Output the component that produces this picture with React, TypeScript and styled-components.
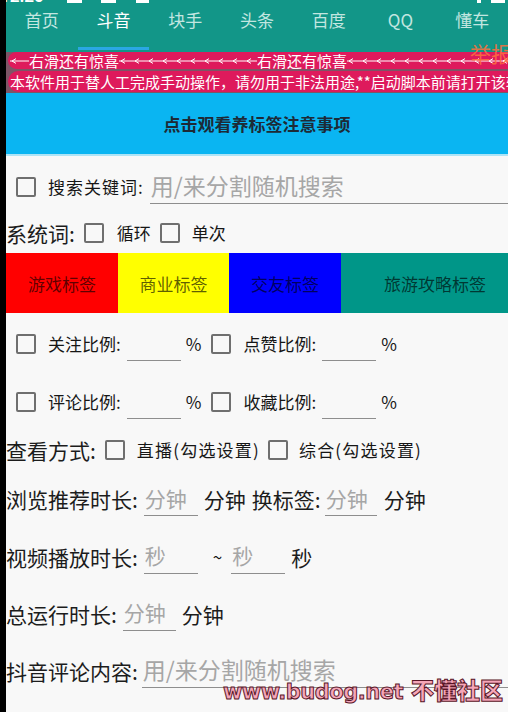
import React from 'react';
import styled, { createGlobalStyle } from 'styled-components';

const GlobalStyle = createGlobalStyle`
  html, body {
    margin: 0;
    padding: 0;
    background: #000;
  }
  body {
    font-family: 'Noto Sans CJK SC', 'Noto Sans', sans-serif;
  }
  * {
    box-sizing: border-box;
  }
`;

const CJK = `'Noto Sans CJK SC', 'Noto Sans', sans-serif`;

const Screen = styled.div`
  position: relative;
  width: 508px;
  height: 712px;
  overflow: hidden;
  background: #000;
  padding-left: 6px;
`;

const Page = styled.div`
  height: 100%;
  background: #f8f8f8;
  display: flex;
  flex-direction: column;
`;

/* header */

const Header = styled.header`
  background: #129688;
`;

const StatusBar = styled.div`
  height: 5px;
  overflow: hidden;
  display: flex;
  align-items: flex-end;
  color: #fff;
`;

const Clock = styled.span`
  margin-left: -6px;
  width: 60px;
  font-family: 'Roboto', sans-serif;
  font-weight: 700;
  font-size: 17px;
  line-height: 17px;
  height: 17px;
`;

const StatusIcon = styled.span<{ $ml: number; $w: number }>`
  align-self: flex-start;
  margin-left: ${p => p.$ml}px;
  width: ${p => p.$w}px;
  height: 3px;
  background: #fff;
`;

const Tabs = styled.nav`
  display: flex;
  height: 45px;
`;

const Tab = styled.div<{ $active?: boolean }>`
  flex: 1;
  display: flex;
  justify-content: center;
  padding-top: 5px;
  font-size: 17px;
  line-height: 20px;
  color: ${p => (p.$active ? '#ffffff' : '#c2e6e0')};
  border-bottom: 3px solid ${p => (p.$active ? '#2aa7e2' : 'transparent')};
`;

/* pink notice band */

const Notice = styled.div`
  background: linear-gradient(#129688 0 2px, #7d5566 2px);
  padding: 2px 0 1px 2px;
  display: flex;
  flex-direction: column;
  gap: 2px;
`;

const NoticeRow = styled.div<{ $h: number }>`
  height: ${p => p.$h}px;
  border-radius: ${p => p.$h / 2}px 0 0 ${p => p.$h / 2}px;
  background: #de1a5c;
  color: #fff;
  display: flex;
  align-items: center;
  white-space: nowrap;
  overflow: hidden;
  font-size: 15px;
  line-height: ${p => p.$h}px;
  padding-left: 2px;
`;

const ArrowSvg = styled.svg`
  flex-shrink: 0;
  display: block;
`;

const ArrowLine: React.FC<{ width: number }> = ({ width }) => {
  const heads: string[] = [];
  for (let x = 2; x < width - 4; x += 14) {
    heads.push(`M${x} 5 L${x + 4} 2.6 M${x} 5 L${x + 4} 7.4`);
  }
  return (
    <ArrowSvg width={width} height={10} viewBox={`0 0 ${width} 10`}>
      <path d={`M0 5 H${width} ${heads.join(' ')}`} stroke="#fff" strokeWidth={1} fill="none" />
    </ArrowSvg>
  );
};

/* guide button */

const GuideButton = styled.div`
  height: 63px;
  background: #0ab5f2;
  border-bottom: 2px solid #aee4f6;
  display: flex;
  align-items: center;
  justify-content: center;
  font-size: 17px;
  font-weight: 700;
  color: #1d2a36;
`;

/* form rows */

const Row = styled.div<{ $h: number; $pt?: number }>`
  height: ${p => p.$h}px;
  padding-top: ${p => p.$pt ?? 0}px;
  display: flex;
  align-items: center;
  white-space: nowrap;
`;

const Label = styled.span<{ $ml?: number }>`
  margin-left: ${p => p.$ml ?? 0}px;
  font-size: 21px;
  line-height: 28px;
  color: #1c1c1c;
`;

const CheckText = styled.span<{ $ml?: number; $ls?: number }>`
  margin-left: ${p => p.$ml ?? 12}px;
  font-size: 17px;
  line-height: 24px;
  letter-spacing: ${p => p.$ls ?? 0}px;
  color: #161616;
`;

const Box = styled.span<{ $ml: number }>`
  flex-shrink: 0;
  margin-left: ${p => p.$ml}px;
  width: 20px;
  height: 20px;
  border: 2px solid #6f6f6f;
  border-radius: 2px;
`;

const Field = styled.input<{ $w?: number; $ml: number; $fs: number }>`
  ${p => (p.$w ? `width: ${p.$w}px;` : 'flex: 1; min-width: 0;')}
  margin-left: ${p => p.$ml}px;
  height: 34px;
  padding: 0 0 2px 1px;
  border: none;
  border-bottom: 1.5px solid #8e8e8e;
  background: transparent;
  outline: none;
  font-family: ${CJK};
  font-size: ${p => p.$fs}px;
  color: #1c1c1c;

  &::placeholder {
    color: #a6a6a6;
  }
`;

const Tags = styled.div`
  display: flex;
  height: 60px;
`;

const TagButton = styled.div<{ $bg: string; $w?: number; $pl?: number }>`
  ${p => (p.$w ? `width: ${p.$w}px;` : 'flex: 1;')}
  background: ${p => p.$bg};
  padding-left: ${p => p.$pl ?? 0}px;
  display: flex;
  align-items: center;
  justify-content: center;
  font-size: 17px;
  color: rgba(0, 0, 0, 0.64);
`;

/* overlays */

const ReportMark = styled.span`
  position: absolute;
  left: 470px;
  top: 40px;
  font-size: 21px;
  line-height: 26px;
  color: rgba(255, 112, 60, 0.85);
  white-space: nowrap;
`;

const Watermark = styled.div`
  position: absolute;
  right: 5px;
  bottom: 9px;
  font-family: 'DejaVu Sans', ${CJK};
  font-weight: 800;
  font-size: 21px;
  line-height: 22px;
  letter-spacing: -0.5px;
  color: #f6a6b8;
  -webkit-text-stroke: 1px #5a1628;
  white-space: nowrap;
`;

const WatermarkCjk = styled.span`
  font-family: ${CJK};
  font-weight: 900;
  font-size: 23px;
  letter-spacing: 0;
  margin-left: 8px;
`;

const tabs = ['首页', '斗音', '块手', '头条', '百度', 'QQ', '懂车'];

const App: React.FC = () => {
  return (
    <Screen>
      <GlobalStyle />
      <Page>
        <Header>
          <StatusBar>
            <Clock>12:20</Clock>
            <StatusIcon $ml={7} $w={15} />
            <StatusIcon $ml={19} $w={15} />
            <StatusIcon $ml={20} $w={13} />
            <StatusIcon $ml={328} $w={4} />
            <StatusIcon $ml={10} $w={14} />
          </StatusBar>
          <Tabs>
            {tabs.map((t, i) => (
              <Tab key={t} $active={i === 1}>{t}</Tab>
            ))}
          </Tabs>
        </Header>

        <Notice>
          <NoticeRow $h={17}>
            <ArrowLine width={19} />
            右滑还有惊喜
            <ArrowLine width={138} />
            右滑还有惊喜
            <ArrowLine width={200} />
          </NoticeRow>
          <NoticeRow $h={21}>
            本软件用于替人工完成手动操作，请勿用于非法用途,**启动脚本前请打开该软件无障碍服务**
          </NoticeRow>
        </Notice>

        <GuideButton>点击观看养标签注意事项</GuideButton>

        <Row $h={57} $pt={4}>
          <Box $ml={10} />
          <CheckText $ls={1}>搜索关键词:</CheckText>
          <Field $ml={6} $fs={23} placeholder="用/来分割随机搜索" />
        </Row>

        <Row $h={40}>
          <Label>系统词:</Label>
          <Box $ml={9} />
          <CheckText $ml={13}>循环</CheckText>
          <Box $ml={9} />
          <CheckText>单次</CheckText>
        </Row>

        <Tags>
          <TagButton $bg="#ff0000" $w={112}>游戏标签</TagButton>
          <TagButton $bg="#ffff00" $w={111}>商业标签</TagButton>
          <TagButton $bg="#0000ff" $w={112}>交友标签</TagButton>
          <TagButton $bg="#009688" $pl={21}>旅游攻略标签</TagButton>
        </Tags>

        <Row $h={61}>
          <Box $ml={10} />
          <CheckText>关注比例:</CheckText>
          <Field $w={54} $ml={6} $fs={17} />
          <CheckText $ml={5}>%</CheckText>
          <Box $ml={10} />
          <CheckText>点赞比例:</CheckText>
          <Field $w={54} $ml={6} $fs={17} />
          <CheckText $ml={5}>%</CheckText>
        </Row>

        <Row $h={56}>
          <Box $ml={10} />
          <CheckText>评论比例:</CheckText>
          <Field $w={54} $ml={6} $fs={17} />
          <CheckText $ml={5}>%</CheckText>
          <Box $ml={10} />
          <CheckText>收藏比例:</CheckText>
          <Field $w={54} $ml={6} $fs={17} />
          <CheckText $ml={5}>%</CheckText>
        </Row>

        <Row $h={40}>
          <Label>查看方式:</Label>
          <Box $ml={9} />
          <CheckText $ls={1.2}>直播(勾选设置)</CheckText>
          <Box $ml={8} />
          <CheckText $ml={11} $ls={1.2}>综合(勾选设置)</CheckText>
        </Row>

        <Row $h={58}>
          <Label>浏览推荐时长:</Label>
          <Field $w={54} $ml={6} $fs={21} placeholder="分钟" />
          <Label $ml={6}>分钟</Label>
          <Label $ml={6}>换标签:</Label>
          <Field $w={52} $ml={4} $fs={21} placeholder="分钟" />
          <Label $ml={7}>分钟</Label>
        </Row>

        <Row $h={57}>
          <Label>视频播放时长:</Label>
          <Field $w={54} $ml={6} $fs={21} placeholder="秒" />
          <CheckText $ml={15}>~</CheckText>
          <Field $w={54} $ml={9} $fs={21} placeholder="秒" />
          <Label $ml={6}>秒</Label>
        </Row>

        <Row $h={57}>
          <Label>总运行时长:</Label>
          <Field $w={53} $ml={6} $fs={21} placeholder="分钟" />
          <Label $ml={6}>分钟</Label>
        </Row>

        <Row $h={57}>
          <Label>抖音评论内容:</Label>
          <Field $ml={4} $fs={23} placeholder="用/来分割随机搜索" />
        </Row>
      </Page>

      <ReportMark>举报</ReportMark>
      <Watermark>
        www.budog.net
        <WatermarkCjk>不懂社区</WatermarkCjk>
      </Watermark>
    </Screen>
  );
};

export default App;
